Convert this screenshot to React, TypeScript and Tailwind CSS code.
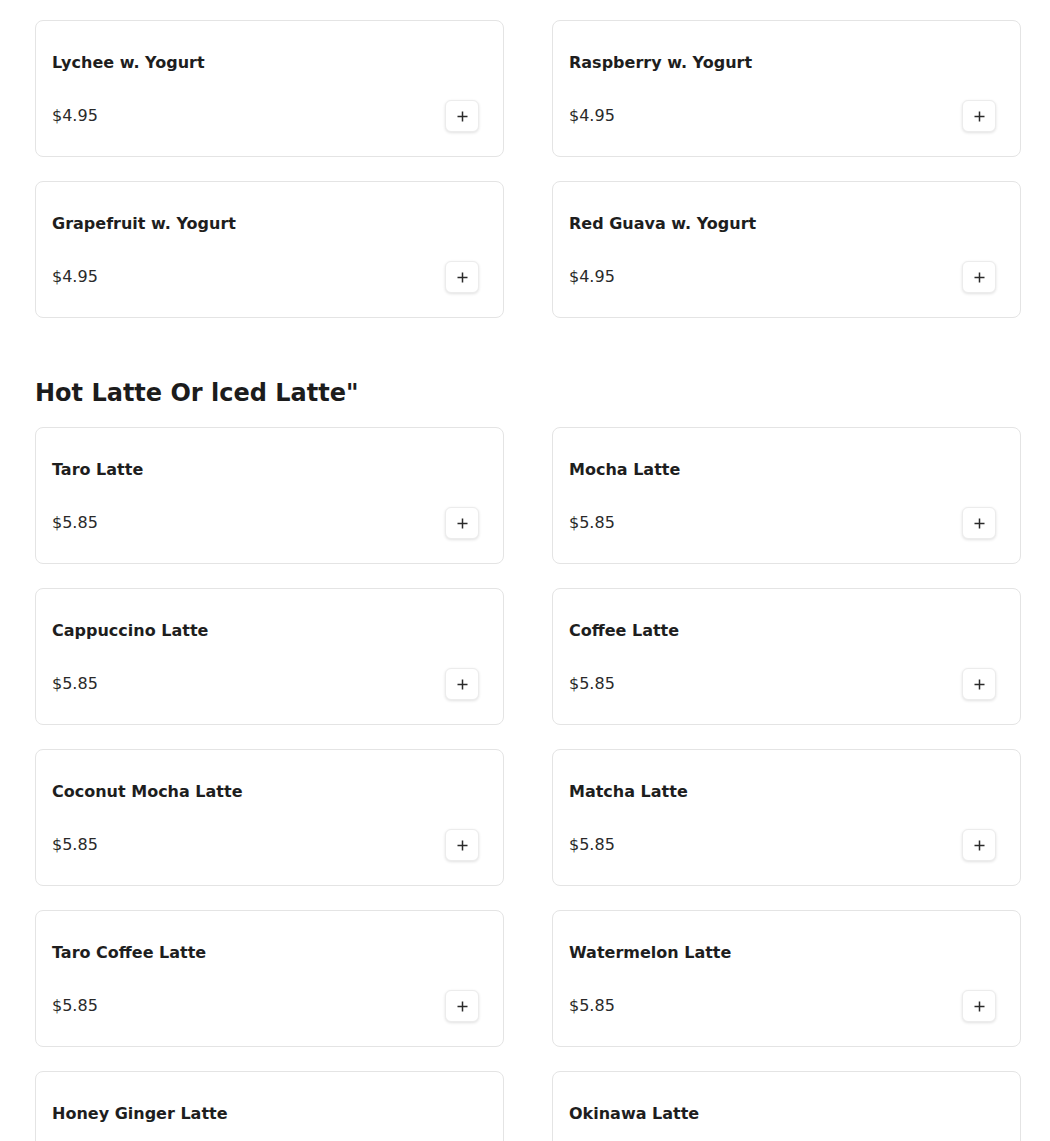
const yogurt = [
  { name: "Lychee w. Yogurt", price: "$4.95" },
  { name: "Raspberry w. Yogurt", price: "$4.95" },
  { name: "Grapefruit w. Yogurt", price: "$4.95" },
  { name: "Red Guava w. Yogurt", price: "$4.95" },
];

const lattes = [
  "Taro Latte",
  "Mocha Latte",
  "Cappuccino Latte",
  "Coffee Latte",
  "Coconut Mocha Latte",
  "Matcha Latte",
  "Taro Coffee Latte",
  "Watermelon Latte",
  "Honey Ginger Latte",
  "Okinawa Latte",
].map((name) => ({ name, price: "$5.85" }));

function Plus() {
  return (
    <svg width="11" height="11" viewBox="0 0 11 11" fill="none">
      <path d="M5.5 0.5v10M0.5 5.5h10" stroke="#2a2a2a" strokeWidth="1.5" />
    </svg>
  );
}

function ItemCard({ name, price }: { name: string; price: string }) {
  return (
    <div className="rounded-lg border border-[#e4e4e4] bg-white pl-4 pr-6 pt-[30px] pb-6 h-[137px]">
      <div className="text-base leading-6 font-bold text-[#1e1e1e]">{name}</div>
      <div className="mt-[25px] flex items-center justify-between">
        <span className="text-base leading-6 text-[#2a2a2a]">{price}</span>
        <button className="w-[34px] h-[32px] flex items-center justify-center rounded-md bg-white border border-[#ececec] shadow-[0_1px_3px_rgba(0,0,0,0.12)]">
          <Plus />
        </button>
      </div>
    </div>
  );
}

export default function App() {
  return (
    <div
      className="min-h-screen bg-white pt-5 pl-[35px]"
      style={{ fontFamily: '"DejaVu Sans", sans-serif' }}
    >
      <div className="grid grid-cols-[469px_469px] gap-x-[48px] gap-y-6">
        {yogurt.map((it) => (
          <ItemCard key={it.name} {...it} />
        ))}
      </div>
      <h2 className="mt-[57px] mb-4 text-2xl leading-9 font-bold text-[#1c1c1c]">
        Hot Latte Or lced Latte"
      </h2>
      <div className="grid grid-cols-[469px_469px] gap-x-[48px] gap-y-6">
        {lattes.map((it) => (
          <ItemCard key={it.name} {...it} />
        ))}
      </div>
    </div>
  );
}
